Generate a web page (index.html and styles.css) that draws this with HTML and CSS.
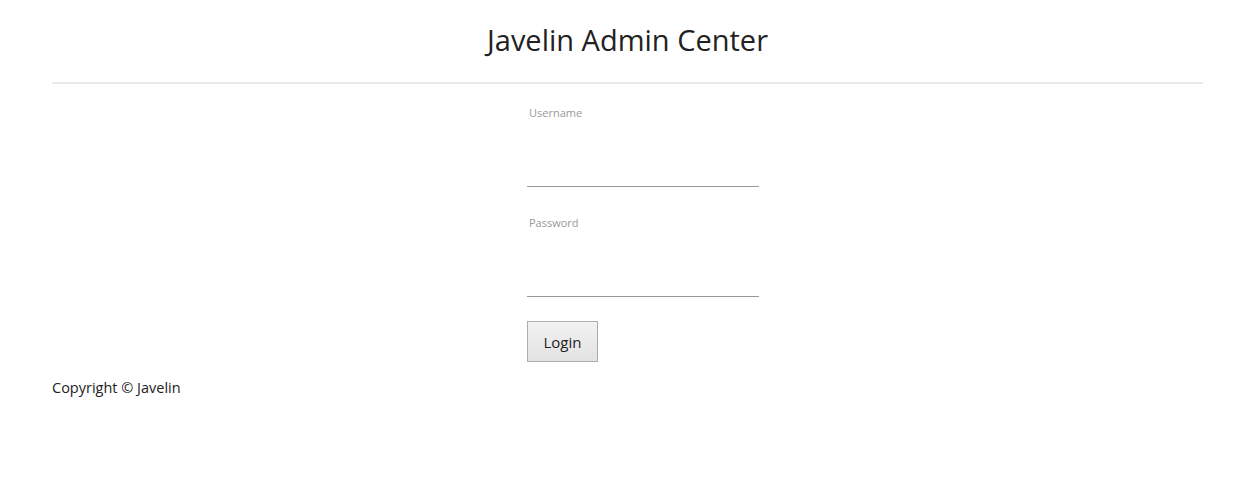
FILE: index.html
```html
<!DOCTYPE html>
<html lang="en">
<head>
<meta charset="utf-8">
<title>Javelin Admin Center</title>
<link rel="stylesheet" href="styles.css">
</head>
<body>
<div class="container">
  <header class="header">
    <h1 class="title">Javelin Admin Center</h1>
  </header>
  <main class="main">
    <form class="login-form">
      <div class="field">
        <label class="field-label" for="username">Username</label>
        <input class="field-input" id="username" type="text">
      </div>
      <div class="field">
        <label class="field-label" for="password">Password</label>
        <input class="field-input" id="password" type="password">
      </div>
      <button class="login-btn" type="button">Login</button>
    </form>
  </main>
  <footer class="footer">Copyright © Javelin</footer>
</div>
</body>
</html>
```
FILE: styles.css
```css
html, body {
  margin: 0;
  padding: 0;
  background: #fff;
}
body {
  font-family: "Open Sans", "Noto Sans", sans-serif;
  color: #222;
}
.container {
  margin: 0 38px 0 52px;
}
.header {
  border-bottom: 2px solid #eaeaea;
  height: 82px;
  display: flex;
  justify-content: center;
}
.title {
  margin: 20px 0 0 0;
  font-size: 29px;
  font-weight: 400;
  line-height: 40px;
  color: #222;
}
.main {
  display: flex;
  justify-content: center;
}
.login-form {
  display: flex;
  flex-direction: column;
  align-items: flex-start;
  width: 232px;
  margin-left: 31px;
  padding-top: 21px;
}
.field {
  display: flex;
  flex-direction: column;
  width: 232px;
  margin-bottom: 28px;
}
.field-label {
  font-size: 11px;
  line-height: 15px;
  color: #999;
  padding-left: 2px;
}
.field-input {
  border: none;
  border-bottom: 1px solid #999;
  height: 67px;
  padding: 0;
  margin: 0;
  outline: none;
  box-sizing: border-box;
  width: 232px;
  font: inherit;
}
.login-btn {
  margin-top: -4px;
  width: 71px;
  height: 41px;
  border: 1px solid #acacac;
  background: linear-gradient(#f2f2f2, #e2e2e2);
  font-family: inherit;
  font-size: 15px;
  color: #222;
  padding: 0;
}
.footer {
  margin-top: 16px;
  font-size: 14.5px;
  line-height: 20px;
  color: #222;
}
```
